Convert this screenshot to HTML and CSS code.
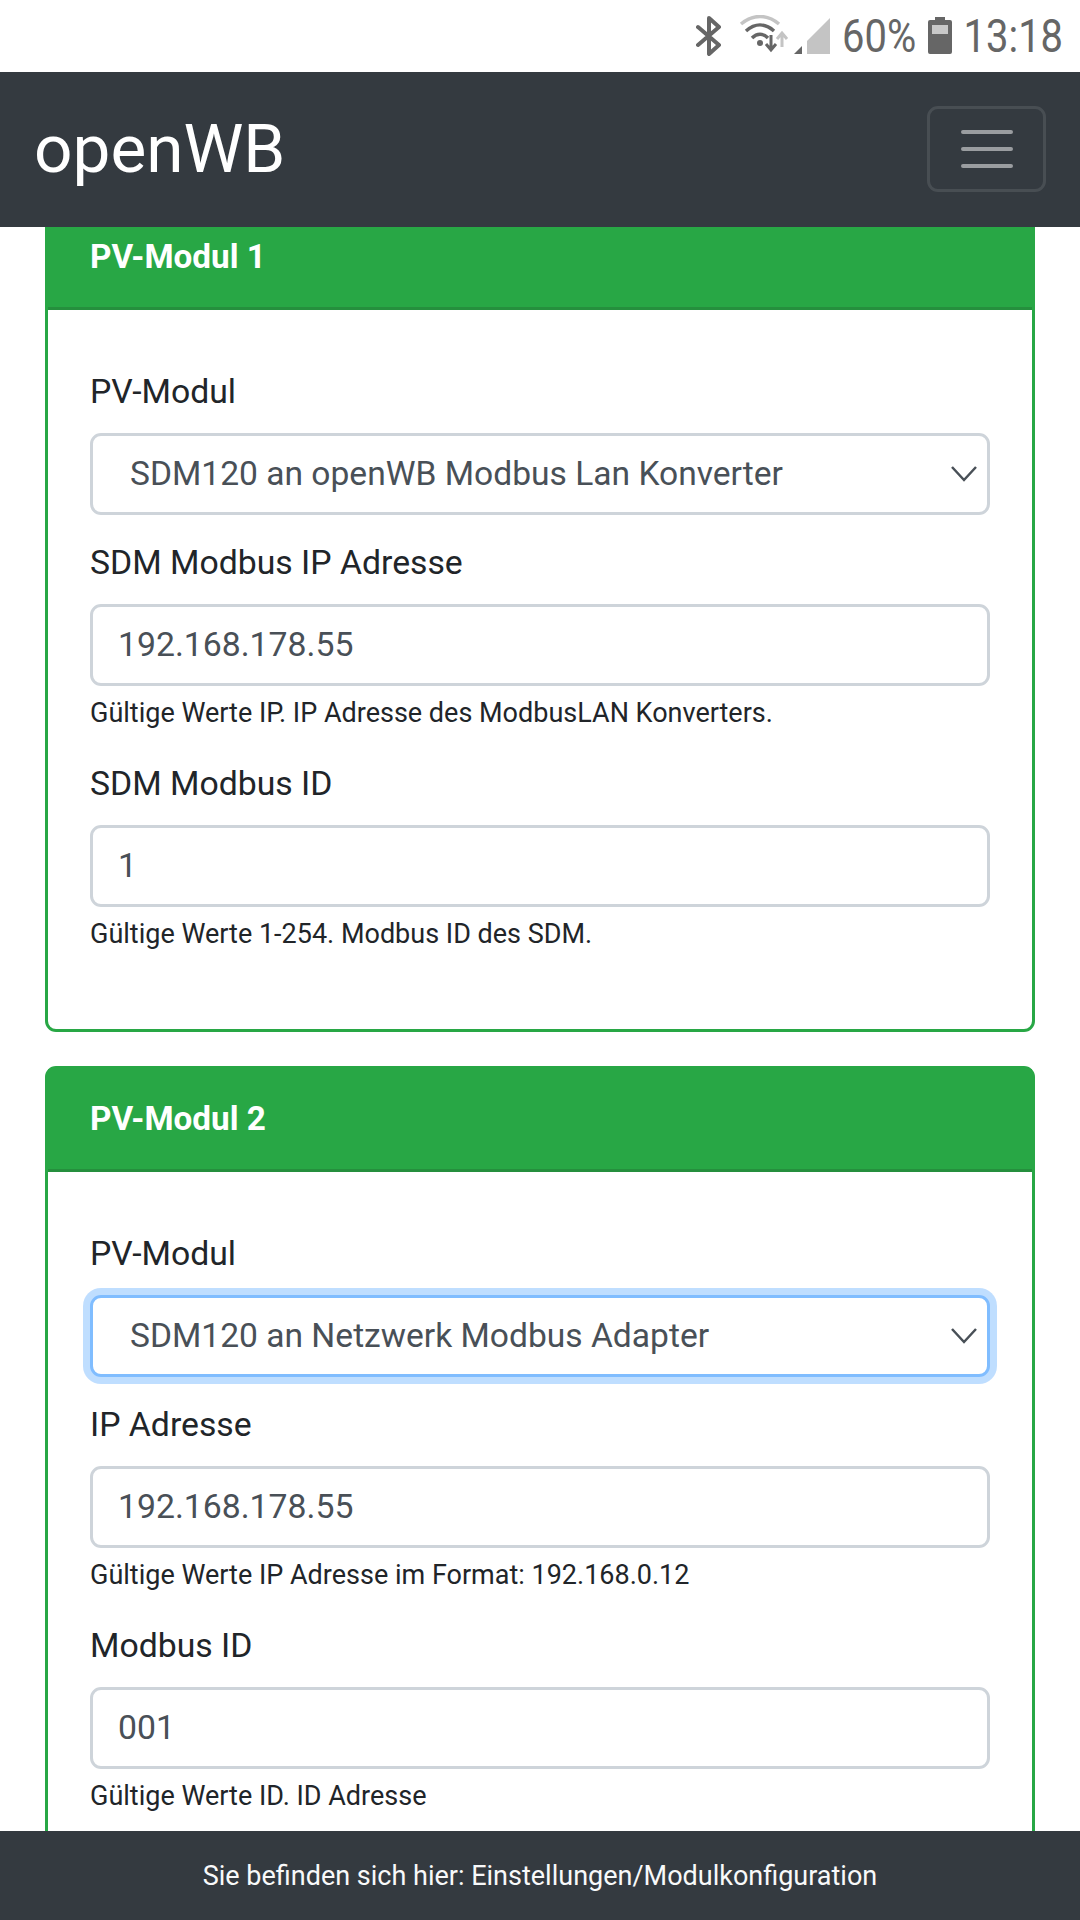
FILE: index.html
```html
<!DOCTYPE html>
<html lang="de">
<head>
  <meta charset="UTF-8">
  <meta name="viewport" content="width=device-width, initial-scale=1.0">
  <title>openWB</title>
  <link rel="stylesheet" href="styles.css">
</head>
<body>
  <div class="statusbar">
    <svg class="icon-bt" width="26" height="40" viewBox="0 0 26 40"><path d="M2 11 L23 29 L13 38 L13 2 L23 11 L2 29" fill="none" stroke="#666" stroke-width="4" stroke-linejoin="round" stroke-linecap="round"/></svg>
    <svg class="icon-wifi" width="52" height="40" viewBox="0 0 52 40">
      <path d="M2 9 C14 -1 28 -1 40 9" fill="none" stroke="#c4c4c4" stroke-width="3.5"/>
      <path d="M7 16 C16 8 26 8 35 16" fill="none" stroke="#666" stroke-width="3.5"/>
      <path d="M13 23 C18 18 24 18 29 23" fill="none" stroke="#666" stroke-width="3.5"/>
      <circle cx="21" cy="28" r="3" fill="#666"/>
      <path d="M32 20 V34 M27 29 L32 35 L37 29" fill="none" stroke="#666" stroke-width="3"/>
      <path d="M43 32 V19 M38 24 L43 18 L48 24" fill="none" stroke="#c4c4c4" stroke-width="3"/>
    </svg>
    <svg class="icon-signal" width="36" height="36" viewBox="0 0 36 36">
      <path d="M0 36 L8 28 V36 Z" fill="#666"/>
      <path d="M13 23 L36 0 V36 H13 Z" fill="#c4c4c4"/>
    </svg>
    <span class="status-text percent">60%</span>
    <svg class="icon-battery" width="24" height="37" viewBox="0 0 24 37">
      <path d="M7 0 H17 V3 H22 Q24 3 24 5 V35 Q24 37 22 37 H2 Q0 37 0 35 V5 Q0 3 2 3 H7 Z" fill="#666"/>
      <rect x="4" y="8" width="16" height="9" fill="#c8c8c8"/>
    </svg>
    <span class="status-text clock">13:18</span>
  </div>

  <nav class="navbar">
    <a class="brand">openWB</a>
    <button class="toggler">
      <svg width="52" height="40" viewBox="0 0 52 40"><path d="M2 3 H50 M2 20 H50 M2 37 H50" stroke="rgba(255,255,255,.5)" stroke-width="4" stroke-linecap="round"/></svg>
    </button>
  </nav>

  <main class="content">
    <section class="card card-scrolled">
      <div class="card-header">PV-Modul 1</div>
      <div class="card-body">
        <div class="form-group">
          <label class="label">PV-Modul</label>
          <select class="control select">
            <option>SDM120 an openWB Modbus Lan Konverter</option>
          </select>
        </div>
        <div class="form-group">
          <label class="label">SDM Modbus IP Adresse</label>
          <input class="control" type="text" value="192.168.178.55">
          <small class="help">Gültige Werte IP. IP Adresse des ModbusLAN Konverters.</small>
        </div>
        <div class="form-group">
          <label class="label">SDM Modbus ID</label>
          <input class="control" type="text" value="1">
          <small class="help">Gültige Werte 1-254. Modbus ID des SDM.</small>
        </div>
      </div>
    </section>

    <section class="card">
      <div class="card-header">PV-Modul 2</div>
      <div class="card-body">
        <div class="form-group">
          <label class="label">PV-Modul</label>
          <select class="control select focused">
            <option>SDM120 an Netzwerk Modbus Adapter</option>
          </select>
        </div>
        <div class="form-group">
          <label class="label">IP Adresse</label>
          <input class="control" type="text" value="192.168.178.55">
          <small class="help">Gültige Werte IP Adresse im Format: 192.168.0.12</small>
        </div>
        <div class="form-group">
          <label class="label">Modbus ID</label>
          <input class="control" type="text" value="001">
          <small class="help">Gültige Werte ID. ID Adresse</small>
        </div>
      </div>
    </section>
  </main>

  <footer class="footer">Sie befinden sich hier: Einstellungen/Modulkonfiguration</footer>
</body>
</html>
```

FILE: styles.css
```css
* {
  box-sizing: border-box;
}
body {
  margin: 0;
  width: 1080px;
  height: 1920px;
  display: flex;
  flex-direction: column;
  overflow: hidden;
  background: #fff;
  color: #212529;
  font-family: Roboto, sans-serif;
}

/* Android status bar */
.statusbar {
  height: 72px;
  flex: none;
  display: flex;
  align-items: center;
  justify-content: flex-end;
  padding-right: 17px;
}
.status-text {
  display: inline-block;
  font-size: 47px;
  line-height: 72px;
  color: #666;
  transform: scaleX(0.85);
  transform-origin: right center;
}
.percent {
  margin-left: -1px;
}
.clock {
  margin-left: -6px;
}
.icon-bt {
  margin-right: 17px;
}
.icon-wifi {
  margin-right: 3px;
  margin-top: -2px;
}
.icon-signal {
  margin-top: -1px;
}
.icon-battery {
  margin-left: 12px;
  margin-top: -1px;
}

/* Top navbar */
.navbar {
  height: 155px;
  flex: none;
  display: flex;
  align-items: center;
  justify-content: space-between;
  background: #343a40;
  padding: 0 34px;
}
.brand {
  color: #fff;
  font-size: 67.5px;
  margin-top: -2px;
}
.toggler {
  width: 119px;
  height: 86px;
  margin-top: -1px;
  display: flex;
  align-items: center;
  justify-content: center;
  background: none;
  border: 3px solid rgba(255, 255, 255, 0.1);
  border-radius: 11px;
  padding: 0;
}

/* Scrolled content */
.content {
  flex: 1;
  min-height: 0;
  overflow: hidden;
  padding: 0 45px;
}
.card {
  border: 3px solid #28a745;
  border-radius: 11px;
  margin-bottom: 34px;
}
.card-scrolled {
  margin-top: -23px;
}
.card-header {
  height: 103px;
  display: flex;
  align-items: center;
  padding: 0 42px 2px;
  background: #28a745;
  border-bottom: 3px solid #258f3d;
  color: #fff;
  font-size: 33.3px;
  font-weight: 700;
}
.card-body {
  padding: 56px 42px 50px;
}
.form-group {
  margin-bottom: 22px;
}
.label {
  display: block;
  font-size: 33.75px;
  line-height: 52px;
  margin-bottom: 15px;
}
.control {
  display: block;
  width: 100%;
  height: 82px;
  padding: 0 25px 2px;
  border: 3px solid #ced4da;
  border-radius: 11px;
  background: #fff;
  color: #495057;
  font-family: Roboto, sans-serif;
  font-size: 33.75px;
}
.select {
  appearance: none;
  padding-left: 37px;
  font-size: 33.6px;
  background: #fff url("data:image/svg+xml,%3Csvg xmlns='http://www.w3.org/2000/svg' width='26' height='16'%3E%3Cpath d='M1 1 L13 14 L25 1' fill='none' stroke='%23495057' stroke-width='2.5'/%3E%3C/svg%3E") no-repeat right 10px center;
}
.focused {
  border-color: #80bdff;
  box-shadow: 0 0 0 7px rgba(0, 123, 255, 0.25);
}
.help {
  display: block;
  margin-top: 7px;
  padding-bottom: 3px;
  font-size: 27px;
  line-height: 40px;
}

/* Fixed footer */
.footer {
  height: 89px;
  flex: none;
  display: flex;
  align-items: center;
  justify-content: center;
  background: #343a40;
  color: #f8f9fa;
  font-size: 27px;
}
```
